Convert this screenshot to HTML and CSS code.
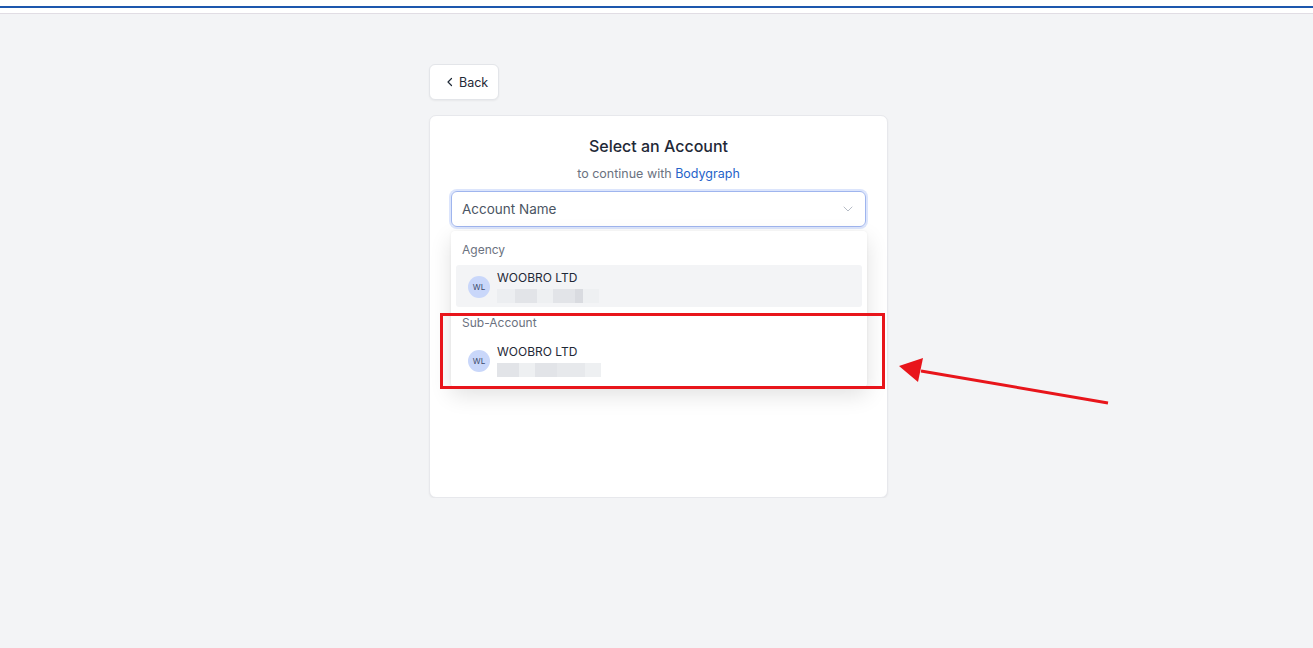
FILE: index.html
```html
<!DOCTYPE html>
<html lang="en">
<head>
    <meta charset="UTF-8">
    <meta name="viewport" content="width=device-width, initial-scale=1.0">
    <title>Select an Account</title>
    <link rel="stylesheet" href="styles.css">
</head>
<body>
    <header class="topbar">
        <div class="topbar-line"></div>
    </header>

    <main class="page">
        <button class="back-btn">
            <svg width="8" height="10" viewBox="0 0 8 10"><path d="M5.5 1.5 L2 5 L5.5 8.5" fill="none" stroke="#1f2937" stroke-width="1.2" stroke-linecap="round" stroke-linejoin="round"/></svg>
            Back
        </button>

        <section class="card">
            <h1 class="card-title">Select an Account</h1>
            <p class="card-sub">to continue with <a href="#">Bodygraph</a></p>

            <div class="select-wrap">
                <div class="select">
                    <span class="select-placeholder">Account Name</span>
                    <svg class="select-chevron" width="10" height="6" viewBox="0 0 10 6"><path d="M1 1 L5 5 L9 1" fill="none" stroke="#b6bcc6" stroke-width="1" stroke-linecap="round" stroke-linejoin="round"/></svg>
                </div>

                <div class="dropdown">
                    <div class="group-label">Agency</div>
                    <div class="option active">
                        <span class="avatar">WL</span>
                        <div class="option-text">
                            <div class="option-name">WOOBRO LTD</div>
                            <div class="redacted">
                                <span class="r1"></span><span class="r2"></span><span class="r3"></span><span class="r2"></span><span class="r4"></span><span class="r3"></span>
                            </div>
                        </div>
                    </div>
                    <div class="group-label sub">Sub-Account</div>
                    <div class="option">
                        <span class="avatar">WL</span>
                        <div class="option-text">
                            <div class="option-name">WOOBRO LTD</div>
                            <div class="redacted">
                                <span class="r2"></span><span class="r3"></span><span class="r2"></span><span class="r5"></span><span class="r3"></span>
                            </div>
                        </div>
                    </div>
                </div>
            </div>

            <!-- annotation overlay -->
            <div class="highlight-box"></div>
            <svg class="arrow" width="230" height="60" viewBox="0 0 230 60">
                <line x1="26" y1="21" x2="213" y2="53" stroke="#e8151b" stroke-width="3"/>
                <polygon points="4,16 28,8 23,32" fill="#e8151b"/>
            </svg>
        </section>
    </main>
</body>
</html>
```

FILE: styles.css
```css
* {
    box-sizing: border-box;
}
body {
    margin: 0;
    background: #f3f4f6;
    font-family: Inter, 'Noto Sans', sans-serif;
    color: #1f2937;
}
.topbar {
    height: 14px;
    background: #fff;
    padding-top: 6px;
    border-bottom: 1px solid #e1dde4;
}
.topbar-line {
    height: 2px;
    background: #1d57ad;
}
.page {
    width: 463px;
    padding-left: 4px;
    margin: 0 auto;
    padding-top: 50px;
}
.back-btn {
    display: flex;
    align-items: center;
    gap: 5px;
    height: 36px;
    width: 70px;
    padding: 0 0 0 16px;
    background: #fff;
    border: 1px solid #e3e5e9;
    border-radius: 6px;
    box-shadow: 0 1px 2px rgba(0, 0, 0, 0.05);
    font-family: inherit;
    font-size: 12.5px;
    font-weight: 400;
    color: #1f2937;
}
.card {
    position: relative;
    margin-top: 15px;
    width: 459px;
    height: 383px;
    background: #fff;
    border: 1px solid #e7e8ec;
    border-radius: 7px;
    box-shadow: 0 1px 2px rgba(0, 0, 0, 0.06);
    padding: 18px 21px 0;
}
.card-title {
    margin: 0;
    text-align: center;
    font-size: 16px;
    line-height: 24px;
    font-weight: 500;
    color: #1f2937;
}
.card-sub {
    margin: 6px 0 0;
    text-align: center;
    font-size: 12.5px;
    line-height: 20px;
    color: #6b7280;
}
.card-sub a {
    color: #2563c9;
    text-decoration: none;
}
.select-wrap {
    position: relative;
    margin-top: 7px;
}
.select {
    display: flex;
    align-items: center;
    justify-content: space-between;
    height: 36px;
    padding: 0 10px 0 10px;
    border: 1px solid #9fb5ee;
    border-radius: 6px;
    box-shadow: 0 0 0 2px #dce5fc;
}
.select-chevron {
    margin-right: 2px;
}
.select-placeholder {
    font-size: 13.5px;
    color: #4b5563;
}
.dropdown {
    position: absolute;
    top: 40px;
    left: 0;
    right: -1px;
    background: #fff;
    border-radius: 4px;
    box-shadow: 0 8px 22px rgba(0, 0, 0, 0.12), 0 0 3px rgba(0, 0, 0, 0.06);
    padding: 9px 5px 6px;
}
.group-label {
    height: 20px;
    line-height: 20px;
    padding: 0 6px;
    font-size: 12px;
    color: #6b7280;
    margin-bottom: 5px;
}
.group-label.sub {
    margin-top: 6px;
    margin-bottom: 6px;
}
.option {
    display: flex;
    align-items: center;
    gap: 7px;
    height: 42px;
    padding: 0 12px;
    border-radius: 3px;
}
.option.active {
    background: #f3f4f6;
}
.avatar {
    width: 22px;
    height: 22px;
    border-radius: 50%;
    background: #c9d7fa;
    color: #3b4a6b;
    font-size: 8px;
    display: flex;
    align-items: center;
    justify-content: center;
    flex-shrink: 0;
    margin-top: 2px;
}
.option-name {
    font-size: 12px;
    line-height: 18px;
    color: #1f2937;
}
.redacted {
    display: flex;
    height: 14px;
    margin-top: 2px;
}
.redacted span {
    height: 14px;
    background: #e5e7eb;
}
.redacted .r1 { width: 18px; background: #eceef1; }
.redacted .r2 { width: 22px; background: #e2e4e8; }
.redacted .r3 { width: 16px; background: #eef0f2; }
.redacted .r4 { width: 8px; background: #d9dbe0; }
.redacted .r5 { width: 28px; background: #e7e9ec; }
.highlight-box {
    position: absolute;
    left: 10px;
    top: 197px;
    width: 445px;
    height: 76px;
    border: 3px solid #e8151b;
}
.arrow {
    position: absolute;
    left: 465px;
    top: 234px;
}
```
